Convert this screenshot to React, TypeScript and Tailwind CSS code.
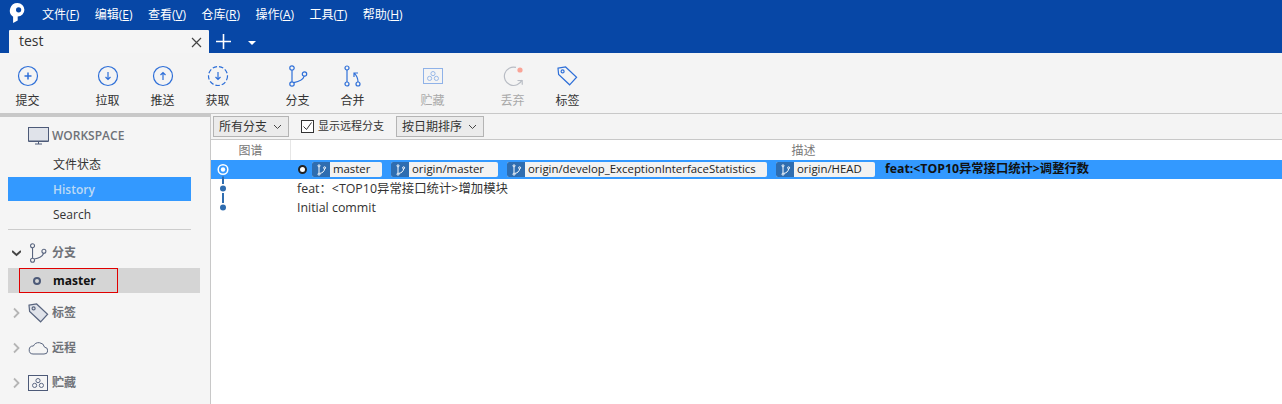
import type { ReactNode } from 'react';

const FONT = 'font-["Open_Sans","Noto_Sans_CJK_SC",sans-serif]';

const menus = [
  { name: '文件', key: 'F' },
  { name: '编辑', key: 'E' },
  { name: '查看', key: 'V' },
  { name: '仓库', key: 'R' },
  { name: '操作', key: 'A' },
  { name: '工具', key: 'T' },
  { name: '帮助', key: 'H' },
];

function BranchIcon({ color, size = 22 }: { color: string; size?: number }) {
  return (
    <svg width={size} height={size} viewBox="0 0 22 22" fill="none" stroke={color} strokeWidth="1.2">
      <circle cx="5" cy="3" r="2.2" />
      <circle cx="5" cy="19" r="2.2" />
      <circle cx="17.5" cy="9" r="2.2" />
      <path d="M5 5.2v11.6M6.8 17.6c6-1 9.6-3.6 10.4-6.4" />
    </svg>
  );
}

function CircleIcon({ arrow }: { arrow: 'plus' | 'down' | 'up' | 'fetch' }) {
  return (
    <svg width="22" height="22" viewBox="0 0 22 22" fill="none" stroke="#2e6fd8" strokeWidth="1.2">
      <circle cx="11" cy="11" r="9.5" strokeDasharray={arrow === 'fetch' ? '4.5 2' : undefined} />
      {arrow === 'plus' && <path d="M11 7.5v7M7.5 11h7" strokeWidth="1.5" />}
      {(arrow === 'down' || arrow === 'fetch') && <path d="M11 7v7.5M8.5 12l2.5 2.5 2.5-2.5" />}
      {arrow === 'up' && <path d="M11 15V7.5M8.5 10L11 7.5l2.5 2.5" />}
    </svg>
  );
}

function StashIcon({ color, bg = 'none', w = 20, h = 16 }: { color: string; bg?: string; w?: number; h?: number }) {
  return (
    <svg width={w} height={h} viewBox="0 0 20 16" fill="none" stroke={color}>
      <rect x="0.5" y="0.5" width="19" height="15" fill={bg} />
      <circle cx="10" cy="5.6" r="2.1" strokeWidth="0.9" />
      <circle cx="6.6" cy="10.4" r="2.1" strokeWidth="0.9" />
      <circle cx="13.4" cy="10.4" r="2.1" strokeWidth="0.9" />
    </svg>
  );
}

function TagIcon({ color, fill = 'none' }: { color: string; fill?: string }) {
  return (
    <svg width="21" height="20" viewBox="0 0 21 20" fill={fill} stroke={color} strokeWidth="1.2">
      <path d="M1 2.2 8.6 1l11 10.2-7 7.6L1.6 8.4z" />
      <circle cx="5.6" cy="5.4" r="1.5" />
    </svg>
  );
}

function ToolButton({ icon, label, muted, className = '' }: { icon: ReactNode; label: string; muted?: boolean; className?: string }) {
  return (
    <div className={`flex w-[55px] flex-col items-center ${className}`}>
      <div className="flex h-[22px] items-center justify-center">{icon}</div>
      <span className={`mt-[5px] text-[12px] leading-[18px] ${muted ? 'text-[#a9a9a9]' : 'text-[#333333]'}`}>{label}</span>
    </div>
  );
}

function Select({ label, width }: { label: string; width: string }) {
  return (
    <div className={`flex h-[21px] items-center justify-between border border-[#b4b4b4] bg-[#ebebeb] pl-[5px] pr-[6px] text-[12px] text-[#333333] ${width}`}>
      <span>{label}</span>
      <svg width="9" height="6" viewBox="0 0 9 6" fill="none" stroke="#444444">
        <path d="M1 1l3.5 3.5L8 1" />
      </svg>
    </div>
  );
}

function Tag({ name, width }: { name: string; width: string }) {
  return (
    <div className={`flex h-[15px] items-center overflow-hidden rounded-[2px] bg-[#f2f2f2] ${width}`}>
      <div className="flex h-full w-[18px] shrink-0 items-center justify-center bg-[#2f6db0]">
        <svg width="11" height="12" viewBox="0 0 11 12" fill="none" stroke="#ffffff">
          <circle cx="3" cy="1.8" r="1" />
          <circle cx="3" cy="10.2" r="1" />
          <circle cx="8.6" cy="3.8" r="1" />
          <path d="M3 3v6M4 9.4c2.6-.6 4.2-2 4.6-4.4" />
        </svg>
      </div>
      <span className="whitespace-nowrap pb-[1px] pl-[3px] text-[11.4px] leading-[14px] text-[#222222]">{name}</span>
    </div>
  );
}

function GraphCell({ selected, last }: { selected?: boolean; last?: boolean }) {
  return (
    <svg width="24" height="19" viewBox="0 0 24 19" className="shrink-0">
      {selected ? (
        <>
          <path d="M12 16.5V19" stroke="#2f6db0" strokeWidth="2" />
          <circle cx="12" cy="9.5" r="4.8" fill="#3399ff" stroke="#ffffff" strokeWidth="1.5" />
          <circle cx="12" cy="9.5" r="2.2" fill="#ffffff" />
        </>
      ) : (
        <>
          <path d={last ? 'M12 0v5' : 'M12 0v5M12 14v5'} stroke="#2f6db0" strokeWidth="2" />
          <circle cx="12" cy="9.5" r="3" fill="#2f6db0" />
        </>
      )}
    </svg>
  );
}

function SideGroup({ icon, label, open, className = '' }: { icon: ReactNode; label: string; open?: boolean; className?: string }) {
  return (
    <div className={`flex items-center pl-[12px] ${className}`}>
      <svg width="9" height="12" viewBox="0 0 9 12" fill="none" strokeWidth={open ? 2 : 1.8} stroke={open ? '#444444' : '#b5b5b5'} className="mr-[7px] shrink-0">
        {open ? <path d="M0 4l4.5 4L9 4" /> : <path d="M2 1.5 6.5 6 2 10.5" />}
      </svg>
      <div className="flex w-[24px] shrink-0 items-center justify-start">{icon}</div>
      <span className="text-[12px] font-semibold text-[#6f7278]">{label}</span>
    </div>
  );
}

export default function App() {
  return (
    <div className={`flex h-[404px] w-[1282px] flex-col overflow-hidden bg-white ${FONT}`}>
      {/* title bar */}
      <div className="h-[53px] shrink-0 bg-[#0747a6]">
        <div className="flex h-[30px] items-center">
          <svg width="17" height="22" viewBox="0 0 17 22" className="ml-[9px] mr-[16px] mb-[4px]">
            <path d="M8.5 1a7.6 7.6 0 0 0-4.4 13.8V21l4.6-2.6v-3.8A6.8 6.8 0 0 0 8.5 1z" fill="#ffffff" />
            <circle cx="9.6" cy="7.8" r="2.6" fill="#0747a6" />
          </svg>
          <div className="flex gap-[15.4px] text-[12px] text-white">
            {menus.map((item) => (
              <span key={item.key}>
                {item.name}(<span className="underline">{item.key}</span>)
              </span>
            ))}
          </div>
        </div>
        <div className="flex h-[23px] items-center pl-[9px]">
          <div className="flex h-full w-[200px] items-center justify-between rounded-t-[1px] bg-[#f5f5f5] pb-[2px] pl-[10px] pr-[7px]">
            <span className="text-[14px] text-[#333333]">test</span>
            <svg width="11" height="11" viewBox="0 0 11 11" stroke="#444444" strokeWidth="1.2" className="mt-[4px]">
              <path d="M1 1l9 9M10 1l-9 9" />
            </svg>
          </div>
          <svg width="15" height="15" viewBox="0 0 15 15" stroke="#ffffff" strokeWidth="1.6" className="ml-[7px]">
            <path d="M7.5 0v15M0 7.5h15" />
          </svg>
          <div className="ml-[17px] mt-[2px] h-0 w-0 border-x-[4px] border-t-[4px] border-x-transparent border-t-white" />
        </div>
      </div>

      {/* toolbar */}
      <div className="flex h-[61px] shrink-0 border-b border-[#c8c8c8] bg-[#f4f4f4] pt-[12px]">
        <ToolButton icon={<CircleIcon arrow="plus" />} label="提交" />
        <ToolButton icon={<CircleIcon arrow="down" />} label="拉取" className="ml-[25px]" />
        <ToolButton icon={<CircleIcon arrow="up" />} label="推送" />
        <ToolButton icon={<CircleIcon arrow="fetch" />} label="获取" />
        <ToolButton icon={<BranchIcon color="#2e6fd8" />} label="分支" className="ml-[25px]" />
        <ToolButton
          icon={
            <svg width="18" height="22" viewBox="0 0 18 22" fill="none" stroke="#2e6fd8" strokeWidth="1.2">
              <circle cx="3" cy="3" r="2" />
              <circle cx="3" cy="19" r="2" />
              <circle cx="14" cy="19" r="2" />
              <path d="M3 5v12M14 17c0-4-1-6-3.6-8.6M10 12V8h4" />
            </svg>
          }
          label="合并"
        />
        <ToolButton icon={<StashIcon color="#8fb2e8" />} label="贮藏" muted className="ml-[25px]" />
        <ToolButton
          icon={
            <svg width="22" height="22" viewBox="0 0 22 22" fill="none" stroke="#b8bcc4" strokeWidth="1.2">
              <path d="M14 2.4A9.2 9.2 0 1 0 20 15" />
              <path d="M15.5 15.5l4.6.2.2 4" />
              <circle cx="18" cy="5" r="2.6" fill="#f9a497" stroke="none" />
            </svg>
          }
          label="丢弃"
          muted
          className="ml-[25px]"
        />
        <ToolButton icon={<TagIcon color="#2e6fd8" />} label="标签" />
      </div>

      <div className="flex min-h-0 flex-1">
        {/* sidebar */}
        <div className="w-[211px] shrink-0 border-r border-[#c8c8c8] bg-[#f5f5f5]">
          <div className="h-[3px] bg-[#c8c8c8]" />
          <div className="mt-[9px] flex h-[20px] items-center pl-[28px]">
            <svg width="21" height="18" viewBox="0 0 21 18" fill="#e0e3ea" stroke="#4d5a78" className="mr-[3px] shrink-0">
              <rect x="0.5" y="0.5" width="20" height="13.5" />
              <path d="M0.5 14.5h20M10.5 15v2M7 17h7" fill="none" />
            </svg>
            <span className="text-[12px] font-semibold text-[#6f7278]">WORKSPACE</span>
          </div>
          <div className="mt-[7px] flex h-[24px] items-center pl-[53px] text-[12px] text-[#333333]">文件状态</div>
          <div className="ml-[8px] flex h-[24px] w-[183px] items-center bg-[#3399ff] pl-[45px] pt-[1px] text-[12px] font-semibold text-[#bcd9f5]">History</div>
          <div className="flex h-[27px] items-center pl-[53px] text-[12px] text-[#333333]">Search</div>
          <div className="ml-[8px] mt-[1px] w-[183px] border-t border-[#cccccc]" />
          <SideGroup className="mt-[12px] h-[22px]" open label="分支" icon={<BranchIcon color="#59657f" size={20} />} />
          <div className="ml-[8px] mt-[4px] h-[25px] w-[192px] bg-[#d5d5d5] pl-[11px]">
            <div className="flex h-full w-[99px] items-center border border-[#e00000] pl-[13px]">
              <div className="h-[8px] w-[8px] rounded-full border-2 border-[#4d5a78]" />
              <span className="ml-[12px] text-[12px] font-bold text-[#111111]">master</span>
            </div>
          </div>
          <SideGroup className="mt-[9px] h-[22px]" label="标签" icon={<TagIcon color="#59657f" fill="#e0e3ea" />} />
          <SideGroup
            className="mt-[13px] h-[22px]"
            label="远程"
            icon={
              <svg width="20" height="14" viewBox="0 0 20 14" fill="none" stroke="#59657f">
                <path d="M5 13h11a3.4 3.4 0 0 0 .6-6.8A6 6 0 0 0 5.4 5 4 4 0 0 0 5 13z" />
              </svg>
            }
          />
          <SideGroup className="mt-[13px] h-[22px]" label="贮藏" icon={<StashIcon color="#4d5a78" />} />
        </div>

        {/* history */}
        <div className="min-w-0 flex-1">
          <div className="flex h-[26px] items-center border-b border-[#c8c8c8] bg-[#f4f4f4] pl-[2px] text-[12px]">
            <Select label="所有分支" width="w-[76px]" />
            <div className="ml-[12px] h-[13px] w-[13px] border border-[#333333] bg-white">
              <svg width="11" height="11" viewBox="0 0 11 11" fill="none" stroke="#333333">
                <path d="M1.5 5.5l3 3 5-7" />
              </svg>
            </div>
            <span className="ml-[4px] w-[78px] text-[11px] text-[#333333]">显示远程分支</span>
            <Select label="按日期排序" width="w-[88px]" />
          </div>
          <div className="flex h-[20px] items-center text-[12px] text-[#777777]">
            <div className="flex h-full w-[80px] items-center justify-center border-r border-[#e6e6e6] pt-[1px]">图谱</div>
            <div className="flex-1 pl-[34px] pt-[1px] text-center">描述</div>
          </div>
          <div className="flex h-[19px] items-center bg-[#3399ff]">
            <GraphCell selected />
            <div className="ml-[63px] h-[9px] w-[9px] rounded-full border-[2px] border-[#222222] bg-white" />
            <div className="ml-[5px] flex gap-[9px]">
              <Tag name="master" width="w-[70px]" />
              <Tag name="origin/master" width="w-[107px]" />
              <Tag name="origin/develop_ExceptionInterfaceStatistics" width="w-[260px]" />
              <Tag name="origin/HEAD" width="w-[99px]" />
            </div>
            <span className="ml-[10px] text-[12.3px] font-bold text-[#111111]">feat:&lt;TOP10异常接口统计&gt;调整行数</span>
          </div>
          <div className="flex h-[19px] items-center">
            <GraphCell />
            <span className="ml-[62px] pt-[1px] text-[12.4px] text-[#333333]">feat：&lt;TOP10异常接口统计&gt;增加模块</span>
          </div>
          <div className="flex h-[19px] items-center">
            <GraphCell last />
            <span className="ml-[62px] pt-[1px] text-[12.4px] text-[#333333]">Initial commit</span>
          </div>
        </div>
      </div>
    </div>
  );
}
